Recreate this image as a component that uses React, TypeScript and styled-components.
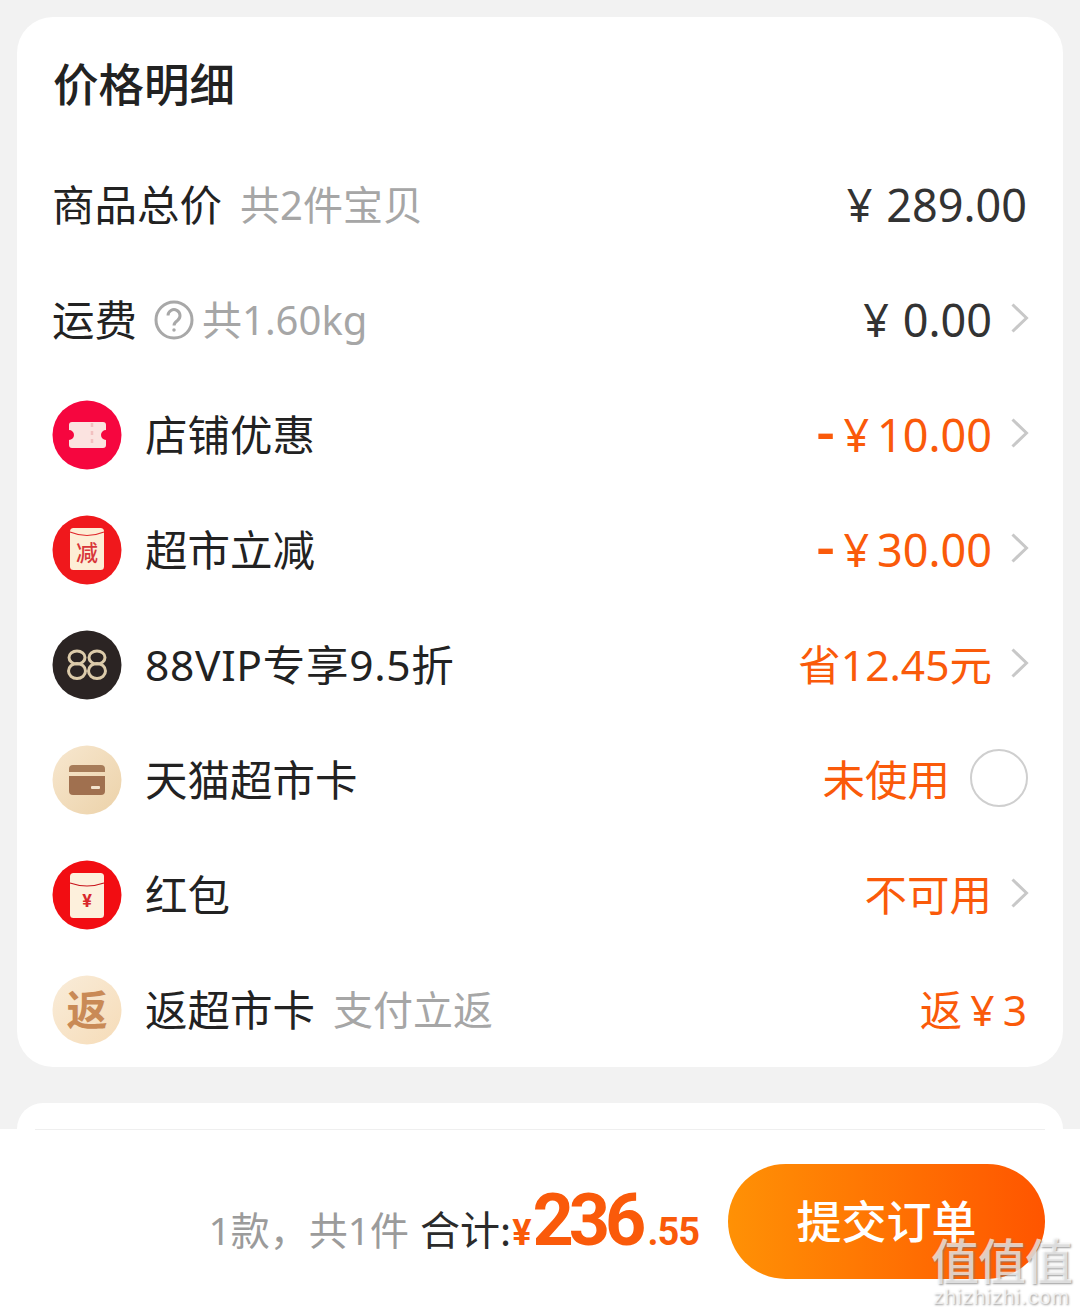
import React from "react";
import styled, { createGlobalStyle } from "styled-components";

const Global = createGlobalStyle`
  html, body { margin: 0; padding: 0; background: #f2f2f2; }
  * { box-sizing: border-box; }
`;

const FONT = `"Noto Sans", "Noto Sans CJK SC", sans-serif`;
const CJK = `"Noto Sans CJK SC", sans-serif`;
const ORANGE = "#fa5a0a";

const Page = styled.div`
  position: relative;
  width: 1080px;
  height: 1315px;
  overflow: hidden;
  display: flex;
  flex-direction: column;
  font-family: ${FONT};
  background: #f2f2f2;
`;
const Content = styled.div`
  flex: 1;
  min-height: 0;
  overflow: hidden;
  padding: 17px 17px 0;
  display: flex;
  flex-direction: column;
  gap: 36px;
`;
const Card = styled.section`
  background: #fff;
  border-radius: 36px;
  height: 1050px;
  flex: none;
  padding: 0 36px 0 35px;
`;
const NextCard = styled.div`
  flex: 1;
  background: #fff;
  border-radius: 36px 36px 0 0;
`;
const Title = styled.h2`
  margin: 0;
  padding: 33px 0 0 1px;
  font-size: 45.5px;
  line-height: 64px;
  font-weight: 500;
  color: #222;
  font-family: ${CJK};
  box-sizing: content-box;
  height: 64px;
`;
const Rows = styled.div`
  margin-top: 33px;
  display: flex;
  flex-direction: column;
`;
const Row = styled.div`
  height: 115px;
  display: flex;
  align-items: center;
`;
const Left = styled.div`
  flex: 1;
  min-width: 0;
  display: flex;
  align-items: center;
`;
const IconSlot = styled.div`
  width: 70px;
  height: 70px;
  margin-right: 23px;
  flex: none;
  svg { display: block; }
`;
const Label = styled.span<{ $tracking?: number }>`
  font-size: 42.5px;
  line-height: 56px;
  color: #222;
  letter-spacing: ${(p) => p.$tracking ?? 0}px;
`;
const Sub = styled.span`
  font-size: 40px;
  line-height: 56px;
  color: #a6a6a6;
  margin-left: 18px;
`;
const Help = styled.span`
  display: inline-flex;
  margin-left: 17px;
  margin-right: -10px;
`;
const Right = styled.div`
  display: flex;
  align-items: center;
`;
const Value = styled.span<{ $accent?: boolean; $numeric?: boolean; $gap?: number }>`
  font-size: ${(p) => (p.$numeric ? "45px" : "42.5px")};
  line-height: 56px;
  color: ${(p) => (p.$accent ? ORANGE : "#333")};
  word-spacing: ${(p) => p.$gap ?? 2}px;
  white-space: pre;
`;
const Minus = styled.span`
  font-size: 58px;
  line-height: 0;
  font-weight: 500;
  margin-right: 1px;
`;
const ChevronSlot = styled.span`
  display: inline-flex;
  width: 35px;
  justify-content: flex-end;
  margin-top: -3px;
  svg { margin-right: -3px; }
`;
const Radio = styled.span`
  width: 58px;
  height: 58px;
  border-radius: 50%;
  border: 2.5px solid #cfcfcf;
  margin-left: 20px;
  margin-right: -1px;
  margin-top: -4px;
`;
const Bar = styled.footer`
  height: 186px;
  flex: none;
  background: #fff;
  display: flex;
  flex-direction: column;
  position: relative;
  z-index: 1;
`;
const BarLine = styled.div`
  height: 1px;
  margin: 0 35px;
  background: #efefef;
`;
const BarBody = styled.div`
  flex: 1;
  display: flex;
  justify-content: flex-end;
  align-items: center;
  padding: 0 35px 2px 0;
`;
const Summary = styled.div`
  display: flex;
  align-items: baseline;
  margin-right: 29px;
  margin-top: -2px;
`;
const Count = styled.span`
  font-size: 39px;
  color: #9b9b9b;
  margin-right: 11px;
`;
const Sum = styled.span`
  font-size: 40px;
  color: #2b2b2b;
  font-family: ${CJK};
`;
const Cur = styled.span`
  font-size: 36px;
  font-weight: 700;
  color: ${ORANGE};
  font-family: Roboto, sans-serif;
  margin: 0 1px 0 1px;
`;
const Big = styled.span`
  font-size: 72px;
  line-height: 72px;
  font-weight: 700;
  color: ${ORANGE};
  font-family: Roboto, sans-serif;
  letter-spacing: -5px;
`;
const Cents = styled.span`
  font-size: 38px;
  font-weight: 700;
  color: ${ORANGE};
  font-family: Roboto, sans-serif;
  letter-spacing: -1px;
  margin-left: 6px;
`;
const SubmitButton = styled.button`
  width: 317px;
  height: 115px;
  border: 0;
  border-radius: 58px;
  background: linear-gradient(90deg, #ff9105, #ff5500);
  color: #fff;
  font-size: 45px;
  font-weight: 500;
  font-family: ${CJK};
  padding: 0 0 4px;
`;
const Watermark = styled.div`
  position: absolute;
  right: 8px;
  bottom: 8px;
  z-index: 2;
  display: flex;
  flex-direction: column;
  align-items: center;
  color: rgba(255, 255, 255, 0.68);
  text-shadow: 1px 1px 2px rgba(120, 120, 120, 0.75);
  pointer-events: none;
`;
const WatermarkMark = styled.div`
  font-size: 48px;
  line-height: 48px;
  font-family: ${CJK};
  font-weight: 500;
  letter-spacing: -1px;
`;
const WatermarkUrl = styled.div`
  font-size: 21px;
  line-height: 20px;
  margin-top: 5px;
  font-family: "Liberation Sans", sans-serif;
  letter-spacing: 0.8px;
`;

const Chevron = () => (
  <svg width="20" height="32" viewBox="0 0 20 32" fill="none">
    <path d="M2.500 2.500l14 13.500-14 13.500" stroke="#c8c8c8" strokeWidth="3" />
  </svg>
);

const Ticket = () => (
  <svg width="70" height="70" viewBox="0 0 70 70">
    <circle cx="35" cy="35" r="34.500" fill="#f6063f" />
    <path d="M20 22h31a3 3 0 0 1 3 3v5a5 5 0 0 0 0 10v5a3 3 0 0 1-3 3H20a3 3 0 0 1-3-3v-5a5 5 0 0 0 0-10v-5a3 3 0 0 1 3-3z" fill="#fbe3e0" />
    <path d="M40 23v24" stroke="#f2c0c0" strokeWidth="2.500" strokeDasharray="4 4" />
  </svg>
);
const Reduce = () => (
  <svg width="70" height="70" viewBox="0 0 70 70">
    <circle cx="35" cy="35" r="34.500" fill="#f0181c" />
    <rect x="18" y="13" width="34" height="42" rx="3.500" fill="#fdeed6" />
    <path d="M18 17q17 7 34 0" fill="none" stroke="#e0282c" strokeWidth="1.200" />
    <text x="35" y="46" fontSize="22" fontWeight="500" fill="#d8363a" textAnchor="middle" fontFamily={CJK}>减</text>
  </svg>
);
const EightyEight = () => (
  <svg width="70" height="70" viewBox="0 0 70 70">
    <circle cx="35" cy="35" r="34.500" fill="#2b2423" />
    <g fill="none" stroke="#dccbaa" strokeWidth="3">
      <ellipse cx="25" cy="27.500" rx="8" ry="6.500" />
      <ellipse cx="25" cy="41" rx="8.500" ry="7.500" />
      <ellipse cx="45" cy="27.500" rx="8" ry="6.500" />
      <ellipse cx="45" cy="41" rx="8.500" ry="7.500" />
    </g>
  </svg>
);
const CardIcon = () => (
  <svg width="70" height="70" viewBox="0 0 70 70">
    <defs>
      <linearGradient id="cb" x1="0" y1="0" x2="1" y2="1">
        <stop offset="0" stopColor="#f7e7cf" />
        <stop offset="1" stopColor="#ecd2a9" />
      </linearGradient>
    </defs>
    <circle cx="35" cy="35" r="34.500" fill="url(#cb)" />
    <path d="M17 24a4 4 0 0 1 4-4h28a4 4 0 0 1 4 4v3H17z" fill="#a77c59" />
    <path d="M17 31h36v15a4 4 0 0 1-4 4H21a4 4 0 0 1-4-4z" fill="#a0704f" />
    <rect x="39" y="41" width="9" height="3" rx="1" fill="#f3e3cd" />
  </svg>
);
const Envelope = () => (
  <svg width="70" height="70" viewBox="0 0 70 70">
    <circle cx="35" cy="35" r="34.500" fill="#f20d12" />
    <rect x="18" y="13" width="34" height="45" rx="3.500" fill="#fdf0dc" />
    <path d="M18 23q17 6 34 0" fill="none" stroke="#c8141c" strokeWidth="1.200" />
    <text x="35" y="47" fontSize="18" fontWeight="700" fill="#d9282c" textAnchor="middle" fontFamily="Roboto, sans-serif">¥</text>
  </svg>
);
const ReturnIcon = () => (
  <svg width="70" height="70" viewBox="0 0 70 70">
    <defs>
      <linearGradient id="rb" x1="0" y1="0" x2="1" y2="1">
        <stop offset="0" stopColor="#f9ecd9" />
        <stop offset="1" stopColor="#f6dcb8" />
      </linearGradient>
    </defs>
    <circle cx="35" cy="35" r="34.500" fill="url(#rb)" />
    <text x="35" y="50" fontSize="41" fontWeight="700" fill="#c98a56" textAnchor="middle" fontFamily={CJK}>返</text>
  </svg>
);
const HelpIcon = () => (
  <svg width="40" height="40" viewBox="0 0 40 40" fill="none" stroke="#a8a8a8" strokeWidth="3">
    <circle cx="20" cy="20" r="18" />
    <path d="M14 15.500a6 6 0 1 1 9.500 5c-2.300 1.600-3.500 2.500-3.500 5" />
    <circle cx="20" cy="30" r="1" fill="#a8a8a8" strokeWidth="1.500" />
  </svg>
);

type Item = {
  icon?: React.ReactNode;
  label: string;
  tracking?: number;
  help?: boolean;
  sub?: string;
  value: string;
  accent?: boolean;
  numeric?: boolean;
  minus?: boolean;
  gap?: number;
  end?: "chevron" | "radio";
};

const items: Item[] = [
  { label: "商品总价", sub: "共2件宝贝", value: "¥ 289.00", numeric: true },
  { label: "运费", help: true, sub: "共1.60kg", value: "¥ 0.00", numeric: true, end: "chevron" },
  { icon: <Ticket />, label: "店铺优惠", value: " ¥ 10.00", numeric: true, minus: true, accent: true, gap: -4, end: "chevron" },
  { icon: <Reduce />, label: "超市立减", value: " ¥ 30.00", numeric: true, minus: true, accent: true, gap: -4, end: "chevron" },
  { icon: <EightyEight />, label: "88VIP专享9.5折", tracking: 0.7, value: "省12.45元", accent: true, end: "chevron" },
  { icon: <CardIcon />, label: "天猫超市卡", value: "未使用", accent: true, end: "radio" },
  { icon: <Envelope />, label: "红包", value: "不可用", accent: true, end: "chevron" },
  { icon: <ReturnIcon />, label: "返超市卡", sub: "支付立返", value: "返 ¥ 3", accent: true, gap: -3 },
];

export default function App() {
  return (
    <Page>
      <Global />
      <Content>
        <Card>
          <Title>价格明细</Title>
          <Rows>
            {items.map((it) => (
              <Row key={it.label}>
                <Left>
                  {it.icon && <IconSlot>{it.icon}</IconSlot>}
                  <Label $tracking={it.tracking}>{it.label}</Label>
                  {it.help && (
                    <Help>
                      <HelpIcon />
                    </Help>
                  )}
                  {it.sub && <Sub>{it.sub}</Sub>}
                </Left>
                <Right>
                  <Value $accent={it.accent} $numeric={it.numeric} $gap={it.gap}>
                    {it.minus && <Minus>-</Minus>}
                    {it.value}
                  </Value>
                  {it.end === "chevron" && (
                    <ChevronSlot>
                      <Chevron />
                    </ChevronSlot>
                  )}
                  {it.end === "radio" && <Radio />}
                </Right>
              </Row>
            ))}
          </Rows>
        </Card>
        <NextCard />
      </Content>
      <Bar>
        <BarLine />
        <BarBody>
          <Summary>
            <Count>1款，共1件</Count>
            <Sum>合计:</Sum>
            <Cur>¥</Cur>
            <Big>236</Big>
            <Cents>.55</Cents>
          </Summary>
          <SubmitButton>提交订单</SubmitButton>
        </BarBody>
      </Bar>
      <Watermark>
        <WatermarkMark>值值值</WatermarkMark>
        <WatermarkUrl>zhizhizhi.com</WatermarkUrl>
      </Watermark>
    </Page>
  );
}
